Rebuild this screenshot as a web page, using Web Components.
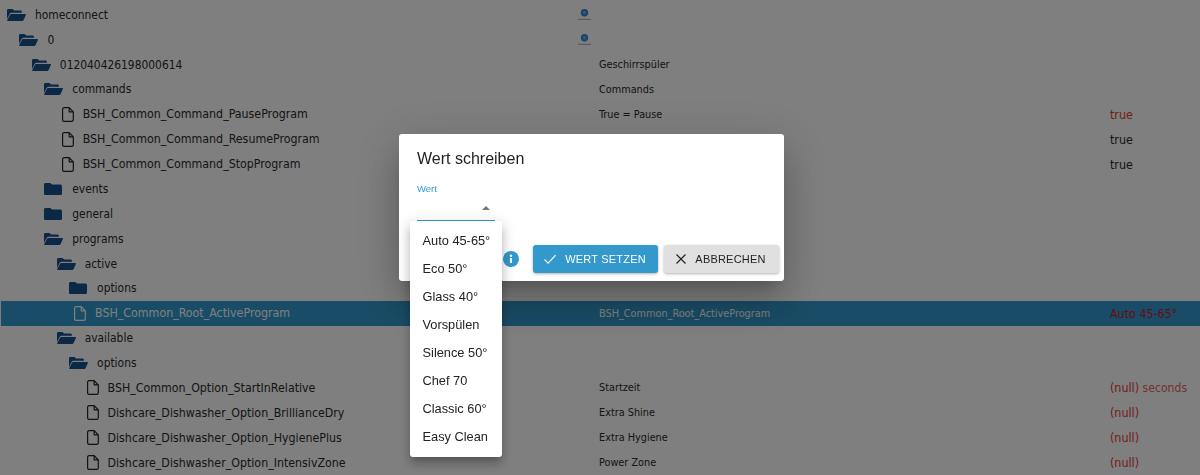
<!DOCTYPE html>
<html lang="de">
<head>
<meta charset="utf-8">
<title>Wert schreiben</title>
<style>
  html, body { margin: 0; height: 100%; overflow: hidden; background: #fff; }
</style>
</head>
<body>
<object-tree>
  <tree-row level="0" kind="open" logo>homeconnect</tree-row>
  <tree-row level="1" kind="open" logo>0</tree-row>
  <tree-row level="2" kind="open" desc="Geschirrspüler">012040426198000614</tree-row>
  <tree-row level="3" kind="open" desc="Commands">commands</tree-row>
  <tree-row level="4" kind="file" desc="True = Pause" value="true" tone="red">BSH_Common_Command_PauseProgram</tree-row>
  <tree-row level="4" kind="file" value="true">BSH_Common_Command_ResumeProgram</tree-row>
  <tree-row level="4" kind="file" value="true">BSH_Common_Command_StopProgram</tree-row>
  <tree-row level="3" kind="closed">events</tree-row>
  <tree-row level="3" kind="closed">general</tree-row>
  <tree-row level="3" kind="open">programs</tree-row>
  <tree-row level="4" kind="open">active</tree-row>
  <tree-row level="5" kind="closed">options</tree-row>
  <tree-row level="5" kind="file" selected desc="BSH_Common_Root_ActiveProgram" value="Auto 45-65°" tone="red">BSH_Common_Root_ActiveProgram</tree-row>
  <tree-row level="4" kind="open">available</tree-row>
  <tree-row level="5" kind="open">options</tree-row>
  <tree-row level="6" kind="file" desc="Startzeit" value="(null)" unit="seconds" tone="red">BSH_Common_Option_StartInRelative</tree-row>
  <tree-row level="6" kind="file" desc="Extra Shine" value="(null)" tone="red">Dishcare_Dishwasher_Option_BrillianceDry</tree-row>
  <tree-row level="6" kind="file" desc="Extra Hygiene" value="(null)" tone="red">Dishcare_Dishwasher_Option_HygienePlus</tree-row>
  <tree-row level="6" kind="file" desc="Power Zone" value="(null)" tone="red">Dishcare_Dishwasher_Option_IntensivZone</tree-row>
</object-tree>

<modal-backdrop>
  <write-dialog heading="Wert schreiben" label="Wert"></write-dialog>
  <select-menu>
    <menu-item>Auto 45-65°</menu-item>
    <menu-item>Eco 50°</menu-item>
    <menu-item>Glass 40°</menu-item>
    <menu-item>Vorspülen</menu-item>
    <menu-item>Silence 50°</menu-item>
    <menu-item>Chef 70</menu-item>
    <menu-item>Classic 60°</menu-item>
    <menu-item>Easy Clean</menu-item>
  </select-menu>
</modal-backdrop>

<script>
const FOLDER_OPEN = `<svg width="19" height="12" viewBox="0 0 19 12"><path fill="currentColor" d="M0 1.300C0 .6.600 0 1.300 0h4.200l1.700 1.500h6.300c.8 0 1.400.6 1.400 1.300v1H4.600c-.9 0-1.600.4-2 1.200L0 10z"/><path fill="currentColor" d="M4.200 4.900h13.800c.7 0 1.200.6.900 1.200l-2.300 5c-.2.600-.8.900-1.400.9H.900c-.6 0-.9-.5-.6-1l2.700-5.200c.2-.6.600-.9 1.200-.9z"/></svg>`;
const FOLDER_CLOSED = `<svg width="18" height="12" viewBox="0 0 18 12"><path fill="currentColor" d="M1.500 0h4.800l1.800 1.600h8.200c.9 0 1.700.7 1.700 1.600v7.200c0 .9-.8 1.600-1.700 1.600H1.500C.6 12 0 11.300 0 10.400V1.600C0 .7.600 0 1.500 0z"/></svg>`;
const FILE = `<svg width="12" height="15" viewBox="0 0 12 15"><path fill="none" stroke="currentColor" stroke-width="1.200" stroke-linejoin="round" d="M2 .7h5.200l4.100 4.100v7.900c0 .9-.7 1.600-1.600 1.600H2c-.8 0-1.400-.7-1.400-1.600V2.300C.6 1.400 1.200.7 2 .7zM7.200.7v4.100h4.100"/></svg>`;
const LOGO = `<svg width="15" height="12" viewBox="0 0 15 12"><circle cx="7.500" cy="3.800" r="2.700" fill="#7fa8d0" stroke="#2f86e0" stroke-width="2"/><rect x="1" y="9.800" width="13" height="1" fill="#9fa8b2"/></svg>`;

class ObjectTree extends HTMLElement {
  constructor() {
    super();
    this.attachShadow({ mode: 'open' });
    this.shadowRoot.innerHTML = `
      <style>
        :host { display: flex; flex-direction: column; padding: 2.400px 0 0 1px; font-family: "DejaVu Sans Condensed", "DejaVu Sans", sans-serif; color: #2a2a2a; }
      </style>
      <slot></slot>`;
  }
}

class TreeRow extends HTMLElement {
  constructor() {
    super();
    this.attachShadow({ mode: 'open' });
  }
  connectedCallback() {
    const kind = this.getAttribute('kind');
    const level = Number(this.getAttribute('level'));
    const icon = kind === 'file' ? FILE : kind === 'closed' ? FOLDER_CLOSED : FOLDER_OPEN;
    const desc = this.getAttribute('desc') || '';
    const value = this.getAttribute('value') || '';
    const unit = this.getAttribute('unit');
    this.shadowRoot.innerHTML = `
      <style>
        :host { display: grid; grid-template-columns: 598px 511px 1fr; align-items: center; height: 24.890px; }
        :host([selected]) { background: #3399cc; color: #fff; }
        .name { display: flex; align-items: center; min-width: 0; padding-left: calc(${level} * 12.420px + var(--start)); white-space: nowrap; }
        .folder { --start: 6px; font-size: 11.900px; }
        .file { --start: 11px; font-size: 12.300px; }
        .icon { display: flex; flex: none; }
        .folder .icon { width: 28px; color: #17508f; }
        .file .icon { width: 21px; color: #222; }
        :host([selected]) .file .icon { color: #fff; }
        .desc { font-size: 10.800px; white-space: nowrap; }
        .value { font-size: 12.400px; white-space: nowrap; }
        :host([tone=red]) .value { color: #e53935; }
        :host([selected][tone=red]) .value { color: #c91b22; }
        .unit { opacity: .8; font-size: 12.100px; }
        .logo { display: flex; margin-left: -22px; }
      </style>
      <div class="name ${kind === 'file' ? 'file' : 'folder'}"><span class="icon">${icon}</span><slot></slot></div>
      <div class="desc">${this.hasAttribute('logo') ? `<span class="logo">${LOGO}</span>` : desc}</div>
      <div class="value">${value}${unit ? ` <span class="unit">${unit}</span>` : ''}</div>`;
  }
}

class ModalBackdrop extends HTMLElement {
  constructor() {
    super();
    this.attachShadow({ mode: 'open' });
    this.shadowRoot.innerHTML = `
      <style>
        :host { position: fixed; inset: 0; background: rgba(0, 0, 0, .5); font-family: "Liberation Sans", Arial, sans-serif; }
      </style>
      <slot></slot>`;
  }
}

class WriteDialog extends HTMLElement {
  constructor() {
    super();
    this.attachShadow({ mode: 'open' });
  }
  connectedCallback() {
    this.shadowRoot.innerHTML = `
      <style>
        :host { position: absolute; left: 399px; top: 134px; width: 385px; height: 147px; box-sizing: border-box; padding: 16px 5px 8px 18px; display: flex; flex-direction: column; background: #fff; border-radius: 3px; color: #1f1f1f; box-shadow: 0 11px 15px -7px rgba(0,0,0,.2), 0 24px 38px 3px rgba(0,0,0,.14), 0 9px 46px 8px rgba(0,0,0,.12); }
        h2 { margin: 0; font-size: 16px; font-weight: 400; line-height: 18px; }
        .field { width: 78px; height: 37px; margin-top: 15px; border-bottom: 2px solid #3399cc; position: relative; }
        label { display: block; font-size: 9.500px; line-height: 11px; color: #3399cc; }
        .arrow { position: absolute; right: 5.500px; top: 23px; width: 0; height: 0; border: 4px solid transparent; border-top: 0; border-bottom: 4.500px solid #757575; }
        .actions { display: flex; align-items: center; justify-content: flex-end; gap: 6px; margin-top: auto; }
        .info { display: flex; margin-right: 8px; }
        button { display: flex; align-items: center; justify-content: center; gap: 8px; height: 28px; padding: 0; border: 0; border-radius: 3px; font: 400 11px "Liberation Sans", Arial, sans-serif; letter-spacing: .2px; box-shadow: 0 1px 3px rgba(0,0,0,.3); }
        button svg { margin-left: -2px; }
        .ok { width: 125px; background: #3399cc; color: #fff; }
        .cancel { width: 115px; background: #e0e0e0; color: #222; }
      </style>
      <h2>${this.getAttribute('heading')}</h2>
      <div class="field"><label>${this.getAttribute('label')}</label><span class="arrow"></span></div>
      <div class="actions">
        <span class="info"><svg width="16" height="16" viewBox="0 0 16 16"><circle cx="8" cy="8" r="8" fill="#3399cc"/><rect x="7" y="7" width="2" height="5" fill="#fff"/><circle cx="8" cy="4.800" r="1.200" fill="#fff"/></svg></span>
        <button class="ok"><svg width="14" height="12" viewBox="0 0 14 12"><path fill="none" stroke="currentColor" stroke-width="1.200" d="M1.500 6.500l3.600 3.600 7.500-8"/></svg>WERT SETZEN</button>
        <button class="cancel"><svg width="12" height="12" viewBox="0 0 12 12"><path fill="none" stroke="currentColor" stroke-width="1.200" d="M1.500 1.500l9 9M10.500 1.500l-9 9"/></svg>ABBRECHEN</button>
      </div>`;
  }
}

class SelectMenu extends HTMLElement {
  constructor() {
    super();
    this.attachShadow({ mode: 'open' });
    this.shadowRoot.innerHTML = `
      <style>
        :host { position: absolute; left: 410px; top: 221px; width: 92px; height: 236px; box-sizing: border-box; padding: 5px 0 8px; display: flex; flex-direction: column; background: #fff; border-radius: 3px; color: #222; box-shadow: 0 5px 5px -3px rgba(0,0,0,.2), 0 8px 10px 1px rgba(0,0,0,.14), 0 3px 14px 2px rgba(0,0,0,.12); }
      </style>
      <slot></slot>`;
  }
}

class MenuItem extends HTMLElement {
  constructor() {
    super();
    this.attachShadow({ mode: 'open' });
    this.shadowRoot.innerHTML = `
      <style>
        :host { display: flex; align-items: center; flex: none; height: 28px; padding-left: 12.500px; font-size: 12.800px; white-space: nowrap; }
      </style>
      <slot></slot>`;
  }
}

customElements.define('object-tree', ObjectTree);
customElements.define('tree-row', TreeRow);
customElements.define('modal-backdrop', ModalBackdrop);
customElements.define('write-dialog', WriteDialog);
customElements.define('select-menu', SelectMenu);
customElements.define('menu-item', MenuItem);
</script>
</body>
</html>
